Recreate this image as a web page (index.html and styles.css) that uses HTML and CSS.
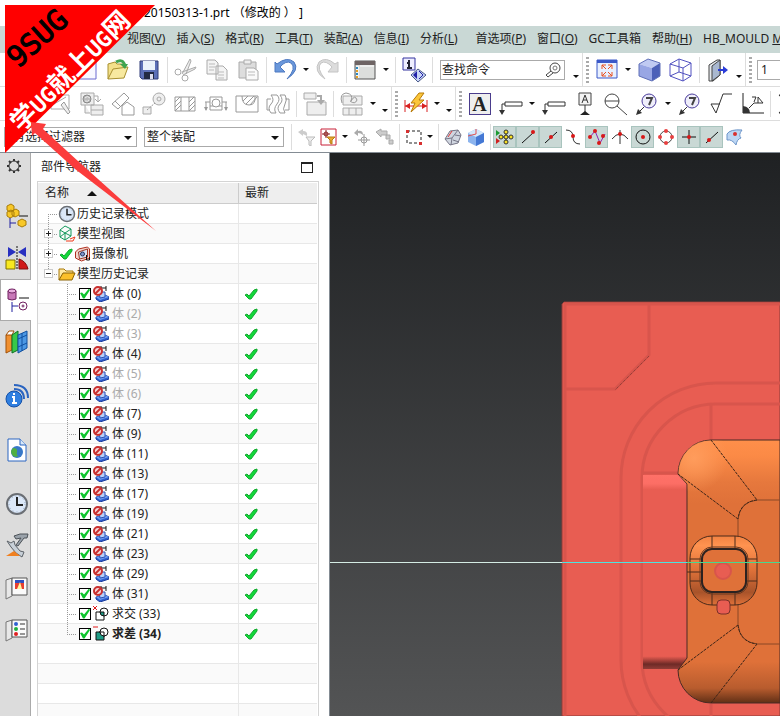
FILE: index.html
```html
<!doctype html>
<html lang="zh-CN">
<head>
    <meta charset="UTF-8">
    <meta name="viewport" content="width=device-width, initial-scale=1.0">
    <title>20150313-1.prt</title>
    <link rel="stylesheet" href="styles.css">
</head>
<body>

<!--公用图标-->
<svg class="defs" width="0" height="0">
    <symbol id="i-ok" viewBox="0 0 14 14">
        <path d="M1 8l2-1 2 2 5-6 3-1 0 2-6 8-2 0z" fill="#12d83a" stroke="#12a82e" stroke-width="1"/>
    </symbol>
    <symbol id="i-body" viewBox="0 0 16 16">
        <path d="M3 11l9-2 4 2v2l-9 3-4-3z" fill="#2f5fd0" stroke="#1b3c9c"/>
        <path d="M3 11l9-2 4 2-9 3z" fill="#6d9cf0"/>
        <path d="M6 6h6v5l-5 1z" fill="#b8d2fa" stroke="#2a50b8"/>
        <path d="M8 0v5M13 0v5M8 2h5" stroke="#111" fill="none"/>
        <circle cx="5" cy="5" r="4" fill="#f6dada" stroke="#c83030" stroke-width="2"/>
        <path d="M2 8l6-6" stroke="#c83030" stroke-width="2"/>
    </symbol>
    <symbol id="i-intersect" viewBox="0 0 16 16">
        <path d="M0 0l4 4M4 0L0 4" stroke="#e01818"/>
        <path d="M7 6h4v4q-4 0-4-4z" fill="#1f9c86"/>
        <path d="M3 6h8v8H3z" fill="none" stroke="#111" stroke-width="1"/>
        <circle cx="11" cy="6" r="4" fill="none" stroke="#111" stroke-width="1"/>
    </symbol>
    <symbol id="i-subtract" viewBox="0 0 16 16">
        <path d="M0 1h5" stroke="#e01818"/>
        <path d="M3 6h8v8H3z" fill="#1f9c86" stroke="#111"/>
        <circle cx="11" cy="6" r="4" fill="#fff" stroke="#111"/>
        <path d="M11 6v5M6 6h5" fill="none" stroke="#111"/>
    </symbol>
    <symbol id="i-clock" viewBox="0 0 24 24">
        <circle cx="12" cy="12" r="10" fill="#dce8f8" stroke="#6a6e74" stroke-width="2"/>
        <circle cx="12" cy="12" r="8" fill="none" stroke="#8fa4c0" stroke-dasharray="1 3"/>
        <path d="M12 5v8h6" fill="none" stroke="#222" stroke-width="2"/>
    </symbol>
    <symbol id="i-views" viewBox="0 0 18 18">
        <path d="M2 5l5-4 6 3v7l-6 4-5-3zM2 5l5 3 6-4M7 8v7M2 12l5-4 6 3" fill="none" stroke="#12985a" stroke-width="1"/>
        <path d="M8 16h7l2-4-5 2" fill="none" stroke="#f03818" stroke-width="1"/>
    </symbol>
    <symbol id="i-camera" viewBox="0 0 16 16">
        <path d="M1 6l3-3 9-2 2 2v9l-8 3-6-3z" fill="#f3d4cc" stroke="#b03020"/>
        <path d="M4 6l9-3v8l-8 2z" fill="#d8e0f2" stroke="#a03828"/>
        <circle cx="8" cy="8" r="2" fill="#8098d0" stroke="#25345e"/>
        <path d="M12 9v5h3v-3" fill="none" stroke="#111"/>
    </symbol>
    <symbol id="i-folder" viewBox="0 0 18 18">
        <path d="M1 15V4h5l2 2h7v3" fill="#ffe9a0" stroke="#a87808"/>
        <path d="M1 15l4-7h12l-3 7z" fill="#fbc02a" stroke="#8a6204"/>
    </symbol>
    <symbol id="i-callout" viewBox="0 0 24 24">
        <path d="M9 15l-7 7" stroke="#333"/><path d="M1 23l2-6 4 4z" fill="#333"/>
        <circle cx="14" cy="9" r="7" fill="#efeefa" stroke="#4a3c9c" stroke-width="1"/>
        <path d="M11 6h6l-3 7" fill="none" stroke="#444" stroke-width="2"/>
    </symbol>
    <symbol id="i-note" viewBox="0 0 24 24">
        <path d="M6 12H3v8M6 10h17v4H6z" fill="none" stroke="#333"/>
        <path d="M0 18h6l-3 5z" fill="#333"/>
    </symbol>
</svg>

<div id="app">
    <header class="title">20150313-1.prt （修改的 ） ]</header>

    <nav class="menu">
        <a href="#">视图(<u>V</u>)</a>
        <a href="#">插入(<u>S</u>)</a>
        <a href="#">格式(<u>R</u>)</a>
        <a href="#">工具(<u>T</u>)</a>
        <a href="#">装配(<u>A</u>)</a>
        <a href="#">信息(<u>I</u>)</a>
        <a href="#">分析(<u>L</u>)</a>
        <a href="#" class="wide">首选项(<u>P</u>)</a>
        <a href="#">窗口(<u>O</u>)</a>
        <a href="#">GC工具箱</a>
        <a href="#">帮助(<u>H</u>)</a>
        <a href="#">HB_MOULD <u>M</u></a>
    </nav>

    <!--标准工具条-->
    <div class="bar standard">
        <div class="group">
            <button class="btn" aria-label="新建"><svg width="24" height="24"><path d="M3 2h18v19H3z" fill="#f8f8ff" stroke="#6a6ad0" stroke-width="1"/></svg></button>
            <button class="btn" aria-label="打开"><svg width="24" height="24"><path d="M2 21V6l7-2 2 2h8v5" fill="#f3e08a" stroke="#a89030"/><path d="M2 21l5-10 15-2-4 11z" fill="#f7e9a0" stroke="#a89030"/><path d="M10 4q7-4 9 4" fill="none" stroke="#3fa450" stroke-width="3"/><path d="M14 6h8l-3 5z" fill="#3fa450"/></svg></button>
            <button class="btn" aria-label="保存"><svg width="24" height="24"><path d="M3 3h18v18H5l-2-2z" fill="#5c70b8" stroke="#303c78"/><path d="M6 3h12v9H6z" fill="#eaf2fb"/><path d="M7 14h10v7H7z" fill="#222a44"/><path d="M13 16h3v5h-3z" fill="#dde"/></svg></button>
            <i class="sep"></i>
            <button class="btn off" aria-label="剪切"><svg width="24" height="24"><path d="M8 16L16 1l1 2-5 13M8 14l14-5-1 2-12 6" fill="#eee" stroke="#aaa"/><circle cx="4" cy="14" r="3" fill="none" stroke="#aaa" stroke-width="1"/><circle cx="11" cy="20" r="3" fill="none" stroke="#aaa" stroke-width="1"/></svg></button>
            <button class="btn off" aria-label="复制"><svg width="24" height="24"><path d="M2 2h8l3 3v11H2zM11 8h7l4 4v10H11z" fill="#f4f4f4" stroke="#aaa"/><path d="M4 6h6M4 9h6M4 12h5M13 14h6M13 17h6M13 20h6" stroke="#bbb"/></svg></button>
            <button class="btn off" aria-label="粘贴"><svg width="24" height="24"><path d="M3 4h17v16H3z" fill="#ddd" stroke="#aaa"/><path d="M8 2h7v4H8z" fill="#eee" stroke="#aaa"/><path d="M10 10h8l4 3v9H10z" fill="#fafafa" stroke="#aaa"/><path d="M12 14h7M12 17h7" stroke="#bbb"/></svg></button>
            <i class="sep"></i>
            <button class="btn" aria-label="撤消"><svg width="24" height="24"><path d="M7 9q6-7 11-4 6 5-4 16 13-9 7-17-7-6-17 2L2 4v10h10z" fill="#6a98dc" stroke="#4c78c0"/></svg></button>
            <button class="drop" aria-label="撤消列表"></button>
            <button class="btn off" aria-label="重做"><svg width="24" height="24"><path d="M16 9q-6-7-11-4-5 5 4 16Q-3 13 3 4q7-6 16 2l3-2v10H12z" fill="#dcdcdc" stroke="#c4c4c4"/></svg></button>
            <i class="sep"></i>
            <button class="btn" aria-label="窗口"><svg width="24" height="24"><path d="M2 3h20v18H2z" fill="#dcdedc" stroke="#555"/><path d="M2 3h20v4H2z" fill="#6e6464"/><path d="M3 8h3v12H3z" fill="#f4f4f4"/><path d="M4 9v2M4 15v2" stroke="#2a8ac0" stroke-width="2"/><path d="M4 12v2M4 18v2" stroke="#e8a020" stroke-width="2"/><path d="M7 8h14" stroke="#fff"/></svg></button>
            <button class="drop" aria-label="窗口列表"></button>
            <i class="sep"></i>
            <button class="btn" aria-label="命令帮助"><svg width="26" height="26"><path d="M2 1h12v12H2z" fill="#eef" stroke="#3434a0"/><path d="M8 3v2M6 6h2v5M6 11h5" fill="none" stroke="#223" stroke-width="2"/><path d="M10 18l7-6 8 6-8 7z" fill="#c8d4f4" stroke="#4a5a8a" stroke-width="1"/><path d="M12 18l4-4v8z" fill="#2222a8"/><path d="M18 14l4 4-4 4" fill="none" stroke="#2222a8"/></svg></button>
            <i class="sep"></i>
            <div class="search">
                <input type="text" value="查找命令" aria-label="查找命令">
                <svg width="18" height="18"><circle cx="11" cy="7" r="5" fill="none" stroke="#444"/><circle cx="11" cy="7" r="2" fill="none" stroke="#777"/><path d="M7 10l-5 4 2 2 5-4" fill="none" stroke="#444"/></svg>
            </div>
            <button class="drop low" aria-label="更多"></button>
        </div>
        <div class="group">
            <i class="grip"></i>
            <button class="btn" aria-label="适合窗口"><svg width="24" height="24"><path d="M2 2h20v18H2z" fill="#e8f0ff" stroke="#3a58c8"/><path d="M2 2h20v3H2z" fill="#3a58c8"/><path d="M7 11V7h4M17 11V7h-4M7 14v4h4M17 14v4h-4M7 7l4 4M17 7l-4 4M7 18l4-4M17 18l-4-4" fill="none" stroke="#e85020"/></svg></button>
            <button class="drop" aria-label="视图列表"></button>
            <button class="btn" aria-label="着色"><svg width="24" height="24"><path d="M1 6l9-5 12 4-8 5z" fill="#c0caf2"/><path d="M1 6l13 4v13L1 18z" fill="#98a6e4"/><path d="M14 10l8-5v13l-8 5z" fill="#4c60b8"/><path d="M1 6l9-5 12 4v13l-8 5-13-5z" fill="none" stroke="#6070b8"/></svg></button>
            <button class="btn" aria-label="线框"><svg width="24" height="24"><path d="M1 6l9-5 12 4v13l-8 5-13-5zM1 6l13 4 8-5M14 10v13M10 1v13M1 18l9-4 12 4" fill="none" stroke="#5050c0"/></svg></button>
            <i class="sep"></i>
            <button class="btn" aria-label="剖切"><svg width="24" height="24"><path d="M3 7l8-5h3v15l-7 6H3z" fill="#e4e8ec" stroke="#444"/><path d="M6 8l8-6v15l-8 6z" fill="#a9b8d0" stroke="#444"/><path d="M12 12h8" stroke="#2a3cd8" stroke-width="2"/><path d="M17 8l5 4-5 4z" fill="#2a3cd8"/></svg></button>
            <button class="drop low" aria-label="更多"></button>
        </div>
        <div class="group">
            <i class="grip"></i>
            <input class="layer" type="text" value="1" aria-label="图层">
        </div>
    </div>

    <!--特征工具条-->
    <div class="bar feature">
        <div class="group">
            <button class="btn off" aria-label="草图"><svg width="24" height="24"><path d="M2 3h18v14H2zM5 12l12-7" fill="none" stroke="#aaa"/><path d="M12 13l3-3 6 10-2 2z" fill="#eee" stroke="#999"/></svg></button>
            <button class="btn off" aria-label="装配"><svg width="24" height="24"><path d="M1 1h13v12H1zM5 13v8h5M11 13h12v10H11zM11 18h12" fill="#eee" stroke="#aaa"/><circle cx="7" cy="7" r="4" fill="#bbb" stroke="#888"/><path d="M5 6q2-3 5 0M5 9q3 1 4-1" fill="none" stroke="#eee"/><path d="M14 4h4v6M15 7l3 3 3-3" fill="none" stroke="#aaa" stroke-width="1"/></svg></button>
            <button class="btn off" aria-label="拔模"><svg width="24" height="24"><path d="M1 12L13 1l5 5L7 17zM4 9l5 5" fill="none" stroke="#999"/><path d="M11 23v-9l5-4 7 5v8z" fill="#fff" stroke="#999"/></svg></button>
            <button class="btn off" aria-label="链接"><svg width="24" height="24"><circle cx="17" cy="7" r="6" fill="#eee" stroke="#aaa"/><circle cx="17" cy="7" r="2" fill="none" stroke="#aaa"/><path d="M1 15h8v7H1z" fill="#eee" stroke="#aaa"/><path d="M5 18l8-7" stroke="#999" stroke-dasharray="2 1"/></svg></button>
            <button class="btn off" aria-label="孔"><svg width="24" height="24"><path d="M2 5h20v14H2zM8 5v14M16 5v14M2 10l5-5M2 15l6-6M2 19l6-6M16 10l5-5M16 15l6-6M16 19l6-6" fill="none" stroke="#999"/></svg></button>
            <button class="btn off" aria-label="凸台"><svg width="24" height="24"><path d="M6 5h12v13H6zM1 10h5M18 10h5M2 10v8M22 10v8M6 14h12" fill="none" stroke="#999"/><circle cx="12" cy="11" r="4" fill="#fff" stroke="#999"/><path d="M0 15h4l-2 4zM20 15h4l-2 4z" fill="#999"/></svg></button>
            <button class="btn off" aria-label="腔体"><svg width="24" height="24"><path d="M1 4h22v16H1zM7 4q0 9 7 9t6-9M11 12l8-8M15 13l7-8M8 9l5-5" fill="none" stroke="#999"/></svg></button>
            <button class="btn off" aria-label="螺纹"><svg width="24" height="24"><path d="M5 3q4 5 0 9t0 9h5q-3-4 1-9t0-9zM14 3q4 5 0 9t0 9h5q-3-4 0-9t0-9zM1 7h4M1 18h3M1 7v11M19 7h4v11h-4" fill="none" stroke="#999"/></svg></button>
            <i class="sep"></i>
            <button class="btn off" aria-label="移动"><svg width="24" height="24"><path d="M1 1h12v6H1zM4 10h19v13H4z" fill="#eee" stroke="#aaa"/><path d="M14 4h4v4" fill="none" stroke="#aaa" stroke-width="2"/><path d="M14 8h8l-4 5z" fill="#aaa"/></svg></button>
            <i class="sep"></i>
            <button class="btn off" aria-label="同步建模"><svg width="24" height="24"><path d="M3 4h19v9H3zM3 16h19v7H3zM9 16v7M16 16v7" fill="#eee" stroke="#aaa"/><path d="M2 11Q-1 2 6 1q8 1 5 8 4-7 6-1-2 5-7 1" fill="none" stroke="#999" stroke-width="1"/></svg></button>
            <button class="drop" aria-label="同步建模列表"></button>
            <button class="drop low" aria-label="更多"></button>
        </div>
        <div class="group">
            <i class="grip"></i>
            <button class="btn" aria-label="快速尺寸"><svg width="24" height="24"><path d="M1 8v12M23 8v12M1 14h22" stroke="#d82020"/><path d="M1 14l5-3v6zM23 14l-5-3v6z" fill="#d82020"/><path d="M15 1h5l-5 7h5L7 20l4-9H7z" fill="#fbc63a" stroke="#b87a08"/></svg></button>
            <button class="drop" aria-label="尺寸列表"></button>
            <button class="drop low" aria-label="更多"></button>
        </div>
        <div class="group last">
            <i class="grip"></i>
            <button class="btn" aria-label="注释"><span class="letter">A</span></button>
            <button class="btn" aria-label="指引线"><svg width="24" height="24"><use href="#i-note"/></svg></button>
            <button class="drop" aria-label="指引线列表"></button>
            <button class="btn" aria-label="标签"><svg width="24" height="24"><use href="#i-note"/></svg></button>
            <button class="btn" aria-label="基准"><svg width="24" height="24"><path d="M6 1h12v12H6z" fill="#f4f4f4" stroke="#444"/><path d="M9 11l3-8 3 8M10 8h4M12 13v7" fill="none" stroke="#333"/><path d="M7 23l5-4 5 4z" fill="#222"/></svg></button>
            <button class="btn" aria-label="目标"><svg width="24" height="24"><circle cx="8" cy="9" r="7" fill="none" stroke="#444"/><path d="M1 9h14M13 14l10 9" stroke="#444"/></svg></button>
            <button class="btn" aria-label="符号"><svg width="24" height="24"><use href="#i-callout"/></svg></button>
            <button class="drop" aria-label="符号列表"></button>
            <button class="btn" aria-label="标识"><svg width="24" height="24"><use href="#i-callout"/></svg></button>
            <button class="btn" aria-label="粗糙度"><svg width="24" height="24"><path d="M2 12h9M2 12l5 9 7-19h9" fill="none" stroke="#333"/></svg></button>
            <button class="btn" aria-label="焊接"><svg width="24" height="24"><path d="M3 1v20h21" fill="none" stroke="#222" stroke-width="1"/><path d="M3 14q7 1 7 7H3z" fill="#333"/><path d="M9 16l5-5h9M12 5h4l-2 5M18 11V5l5 6" fill="none" stroke="#333"/></svg></button>
            <i class="sep"></i>
            <button class="btn" aria-label="求和"><svg width="24" height="24"><path d="M20 3H2l8 9-8 9h18" fill="none" stroke="#333"/></svg></button>
        </div>
    </div>

    <!--选择工具条-->
    <div class="bar selection">
        <div class="combo filter">
            <select aria-label="类型过滤器"><option>有选择过滤器</option></select>
        </div>
        <div class="combo scope">
            <select aria-label="选择范围"><option>整个装配</option></select>
        </div>
        <i class="sep"></i>
        <button class="btn off" aria-label="重置过滤器"><svg width="18" height="18"><path d="M1 4l5-3v2q5 0 4 5l-4-2v2z" fill="#ccc"/><path d="M9 9h9l-4 4v5l-2-1v-4z" fill="#eee" stroke="#bbb"/></svg></button>
        <button class="btn" aria-label="常规过滤器"><svg width="18" height="18"><path d="M1 1h15v16H1z" fill="#fff" stroke="#c82038"/><path d="M6 2v8M2 6h8" stroke="#8a2020"/><circle cx="6" cy="6" r="2" fill="none" stroke="#8a2020"/><path d="M7 9h8l-3 3v4l-2-1v-3z" fill="#e8a830" stroke="#b87a10"/></svg></button>
        <button class="drop" aria-label="过滤器列表"></button>
        <button class="btn off" aria-label="捕捉恢复"><svg width="18" height="18"><path d="M1 5l4-4v2q5-1 5 4-2-2-5-2v3z" fill="#aaa"/><circle cx="11" cy="12" r="3" fill="none" stroke="#999"/><path d="M11 6v12M5 12h12" stroke="#999"/></svg></button>
        <button class="btn off" aria-label="层次选择"><svg width="18" height="18"><path d="M0 4l5-3v2h6v4H5v2zM10 7h4v4h-4zM13 12h4v4h-4z" fill="#ccc" stroke="#aaa"/></svg></button>
        <i class="sep"></i>
        <button class="btn" aria-label="矩形选择"><svg width="18" height="18"><path d="M2 3h14v12H2z" fill="none" stroke="#222" stroke-dasharray="3 2"/><path d="M1 2h3v3H1zM14 14h3v3h-3z" fill="#d83030"/></svg></button>
        <button class="drop" aria-label="选择方式"></button>
        <i class="sep"></i>
        <button class="btn" aria-label="高亮面"><svg width="18" height="18"><path d="M1 11l5-8 8-1 3 5-3 8-8 2z" fill="#d0d6e0" stroke="#778"/><path d="M1 11l7-1 6-8M8 10l-1 7M11 7l6 1M9 12l6 2" fill="none" stroke="#778"/><path d="M4 9l4-6" stroke="#e03838"/></svg></button>
        <button class="btn" aria-label="高亮体"><svg width="18" height="18"><path d="M1 5l8-4 8 4v9l-8 4-8-4z" fill="#8cb4ee"/><path d="M1 5l8 4 8-4-8-4z" fill="#d4e8fc"/><path d="M9 9v9l8-4V5z" fill="#4478d4"/><path d="M9 1v5l-8 2" fill="none" stroke="#e05050"/></svg></button>
        <i class="sep"></i>
        <button class="btn on" aria-label="启用捕捉点"><svg width="18" height="18"><path d="M0 2l4 3-4 3z" fill="#1a9a30"/><path d="M0 10l4 3-4 3z" fill="#d02020"/><path d="M10 3v12M4 9h12" stroke="#333"/><g fill="#f8e020" stroke="#333"><circle cx="10" cy="9" r="2"/><circle cx="10" cy="4" r="2"/><circle cx="10" cy="14" r="2"/><circle cx="5" cy="9" r="2"/><circle cx="15" cy="9" r="2"/></g></svg></button>
        <button class="btn on" aria-label="端点"><svg width="18" height="18"><path d="M3 15L15 4" stroke="#111"/><circle cx="14" cy="4" r="2" fill="#d81818"/></svg></button>
        <button class="btn on" aria-label="中点"><svg width="18" height="18"><path d="M3 15L15 4" stroke="#111"/><circle cx="9" cy="9" r="2" fill="#d81818"/></svg></button>
        <button class="btn" aria-label="控制点"><svg width="18" height="18"><path d="M1 2q7 0 7 7t7 7" fill="none" stroke="#333"/><circle cx="8" cy="8" r="2" fill="#d81818"/></svg></button>
        <button class="btn on" aria-label="交点"><svg width="18" height="18"><path d="M2 9l5-6 5 12 5-9" fill="none" stroke="#9020b0" stroke-width="1"/><g fill="#d81818"><circle cx="2" cy="9" r="2"/><circle cx="7" cy="3" r="2"/><circle cx="11" cy="15" r="2"/><circle cx="15" cy="8" r="2"/></g></svg></button>
        <button class="btn" aria-label="曲线交点"><svg width="18" height="18"><path d="M9 2v14M1 11q8-10 16 0" fill="none" stroke="#333"/><circle cx="9" cy="6" r="2" fill="#d81818"/></svg></button>
        <button class="btn on" aria-label="圆心"><svg width="18" height="18"><circle cx="9" cy="9" r="7" fill="none" stroke="#111" stroke-width="1"/><circle cx="9" cy="9" r="2" fill="#d81818"/></svg></button>
        <button class="btn" aria-label="象限点"><svg width="18" height="18"><circle cx="9" cy="9" r="6" fill="none" stroke="#444"/><g fill="#e84040"><circle cx="9" cy="3" r="2"/><circle cx="9" cy="15" r="2"/><circle cx="3" cy="9" r="2"/><circle cx="15" cy="9" r="2"/></g></svg></button>
        <button class="btn on" aria-label="现有点"><svg width="18" height="18"><path d="M9 2v14M2 9h14" stroke="#111"/><circle cx="9" cy="9" r="2" fill="#d81818"/></svg></button>
        <button class="btn on" aria-label="曲线上的点"><svg width="18" height="18"><path d="M3 15L15 4" stroke="#111"/><circle cx="6" cy="12" r="2" fill="#d81818"/></svg></button>
        <button class="btn" aria-label="面上的点"><svg width="18" height="18"><path d="M1 6q3-5 15-4-4 5-1 8-4 1-5 7Q6 11 1 12z" fill="#bcd6f4" stroke="#6c94c8"/><circle cx="9" cy="6" r="2" fill="#d83030"/></svg></button>
    </div>

    <main class="work">
        <!--资源条-->
        <div class="rail">
            <button class="gear" aria-label="设置"><svg width="16" height="16"><circle cx="8" cy="8" r="5" fill="none" stroke="#333" stroke-width="1"/><path d="M8 1v2M8 13v2M1 8h2M13 8h2M3 3l2 2M11 11l2 2M13 3l-2 2M3 13l2-2" stroke="#333" stroke-width="2"/></svg></button>
            <button aria-label="装配导航器"><svg width="24" height="26"><g fill="#f8c828" stroke="#a87c08"><path d="M2 3l4-2 3 2v4L5 9 2 7zM2 9l4-2 3 2v4l-4 2-3-2zM7 8l4-2 3 2v4l-4 2-3-2zM13 18l4-2 4 2v4l-4 2-4-2z"/></g><path d="M5 15v10M5 20h6" fill="none" stroke="#2020a0"/><path d="M14 13h9" stroke="#111"/></svg></button>
            <button aria-label="约束导航器"><svg width="24" height="26"><path d="M3 2l8 5-8 5zM21 2l-8 5 8 5z" fill="#2830c0"/><path d="M12 1v24" stroke="#111" stroke-dasharray="2 1"/><path d="M1 15h9v9H1z" fill="#f8e820" stroke="#807000"/><path d="M14 14v10h9q-2-8-9-10z" fill="#d01818" stroke="#801010"/></svg></button>
            <button class="active" aria-label="部件导航器"><svg width="24" height="26"><path d="M2 4v8q4 2 8 0V4z" fill="#c878b8" stroke="#702060"/><ellipse cx="6" cy="4" rx="4" ry="2" fill="#e8b0e0" stroke="#702060"/><path d="M13 11h10" stroke="#111"/><path d="M6 15v10M6 19h6" fill="none" stroke="#2020a0"/><circle cx="17" cy="19" r="4" fill="none" stroke="#702060"/><circle cx="17" cy="19" r="1" fill="none" stroke="#702060"/></svg></button>
            <button aria-label="重用库"><svg width="26" height="26"><path d="M2 6l6-4v19l-6 3z" fill="#f09030" stroke="#a05008"/><path d="M2 6l3-4h5L8 6z" fill="#fff" stroke="#a05008"/><path d="M8 6l6-4v19l-6 3z" fill="#38c848" stroke="#107020"/><path d="M14 6l9-4v17l-9 5z" fill="#4c98e4" stroke="#1050a0"/><path d="M14 10l9-4M14 18l9-4M18 4v18" stroke="#1050a0"/></svg></button>
            <button class="far" aria-label="HD3D 工具"><svg width="26" height="26"><circle cx="10" cy="16" r="8" fill="#2f7fe0" stroke="#1450a8"/><path d="M10 10v2M8 14h2v6M8 20h5" fill="none" stroke="#fff" stroke-width="2"/><path d="M10 6q10 0 10 10M10 2q14 0 14 13" fill="none" stroke="#2a64c0" stroke-width="2"/></svg></button>
            <button class="far" aria-label="浏览器"><svg width="24" height="26"><path d="M3 2h12l6 6v16H3z" fill="#fff" stroke="#2a64c0"/><path d="M15 2v6h6" fill="#d8e8f8" stroke="#2a64c0"/><circle cx="12" cy="15" r="6" fill="#3878c8"/><path d="M8 11q5 0 4 4t2 4q-7 3-8-5z" fill="#50b040"/></svg></button>
            <button class="far" aria-label="历史记录"><svg width="24" height="24"><use href="#i-clock"/></svg></button>
            <button aria-label="过程工作室"><svg width="24" height="26"><path d="M9 3l6-2h8l-1 4h-3l-6 8-2-1 5-7-5 1z" fill="#9aa2aa" stroke="#4c5258"/><path d="M2 8l4 2 3-2 1 4 5 6 4 1-2 5-6-4-5-6z" fill="#c8d0d8" stroke="#5c6268"/><path d="M1 23l8-5 6 5z" fill="#f08020"/></svg></button>
            <button aria-label="加工向导"><svg width="26" height="24"><path d="M2 4l6-2v18l-6 3z" fill="#e8e8e8" stroke="#777"/><path d="M8 2h15v17H8z" fill="#fafafa" stroke="#555"/><path d="M11 4h9v9h-9z" fill="#e84030"/><path d="M11 4h9v3h-9z" fill="#3050c0"/><path d="M13 13l3-7 2 7z" fill="#fff8a0"/></svg></button>
            <button aria-label="角色"><svg width="26" height="24"><path d="M2 4l6-2v18l-6 3z" fill="#e8e8e8" stroke="#777"/><path d="M8 2h15v17H8z" fill="#fafafa" stroke="#555"/><circle cx="12" cy="6" r="2" fill="#3060d0"/><circle cx="12" cy="11" r="2" fill="#20b040"/><circle cx="12" cy="16" r="2" fill="#e02020"/><path d="M16 6h5M16 11h5M16 16h5" stroke="#333"/></svg></button>
        </div>

        <!--部件导航器-->
        <section class="panel">
            <div class="head">
                <h1>部件导航器</h1>
                <button class="max" aria-label="最大化"></button>
            </div>
            <div class="tree">
                <table>
                    <thead>
                    <tr><th>名称<i class="up"></i></th><th class="state">最新</th></tr>
                    </thead>
                    <tbody id="rows">
                    <tr><td><div class="cell"><i class="guide first"></i><svg width="18" height="18"><use href="#i-clock"/></svg><span>历史记录模式</span></div></td><td></td></tr>
                    <tr><td><div class="cell"><i class="guide"><b class="box plus"></b></i><svg width="18" height="18"><use href="#i-views"/></svg><span>模型视图</span></div></td><td></td></tr>
                    <tr><td><div class="cell"><i class="guide"><b class="box plus"></b></i><svg width="16" height="14"><use href="#i-ok"/></svg><svg width="17" height="16"><use href="#i-camera"/></svg><span>摄像机</span></div></td><td></td></tr>
                    <tr><td><div class="cell"><i class="guide last"><b class="box"></b></i><svg width="18" height="18"><use href="#i-folder"/></svg><span>模型历史记录</span></div></td><td></td></tr>
                    </tbody>
                </table>
            </div>
        </section>

        <!--图形窗口-->
        <div class="view">
            <svg viewBox="330 153 450 563" preserveAspectRatio="xMinYMin slice">
                <defs>
                    <linearGradient id="orange" x1="0" y1="440" x2="0" y2="704" gradientUnits="userSpaceOnUse">
                        <stop offset="0" stop-color="#ff8f4a"/>
                        <stop offset="0.06" stop-color="#fb8a46"/>
                        <stop offset="0.16" stop-color="#e6783d"/>
                        <stop offset="0.24" stop-color="#df7139"/>
                        <stop offset="0.84" stop-color="#df7139"/>
                        <stop offset="0.94" stop-color="#b85c2e"/>
                        <stop offset="1" stop-color="#5a2c14"/>
                    </linearGradient>
                    <linearGradient id="slab" x1="0" y1="474" x2="0" y2="670" gradientUnits="userSpaceOnUse">
                        <stop offset="0" stop-color="#ff7168"/>
                        <stop offset="0.05" stop-color="#fc6e65"/>
                        <stop offset="0.08" stop-color="#e85d52"/>
                        <stop offset="0.93" stop-color="#e85d52"/>
                        <stop offset="0.97" stop-color="#6e2a26"/>
                        <stop offset="1" stop-color="#96403a"/>
                    </linearGradient>
                    <linearGradient id="ring" x1="0" y1="535" x2="0" y2="605" gradientUnits="userSpaceOnUse">
                        <stop offset="0" stop-color="#f08040"/>
                        <stop offset="0.15" stop-color="#ff9350"/>
                        <stop offset="0.5" stop-color="#df7139"/>
                        <stop offset="0.82" stop-color="#a8532a"/>
                        <stop offset="1" stop-color="#df7139"/>
                    </linearGradient>
                    <radialGradient id="shine" cx="694" cy="458" r="34" gradientUnits="userSpaceOnUse">
                        <stop offset="0" stop-color="#ff9c5c"/>
                        <stop offset="1" stop-color="#ff9c5c" stop-opacity="0"/>
                    </radialGradient>
                    <path id="plate" d="M780 440h-69a33 34 0 0 0-33 34l9 10v174l-9 12a33 33 0 0 0 33 33h69z"/>
                </defs>
                <path d="M562 716V304l2-2h216v414z" fill="#e85d52" stroke="#8a3c38"/>
                <g fill="none" stroke="#d8554c" stroke-width="3">
                    <path d="M565 716V304h215M649 304v51l-34 34h-50"/>
                    <path d="M780 383h-64a95 95 0 0 0-95 95v182a95 95 0 0 0 95 95"/>
                    <path d="M780 404h-64a74 74 0 0 0-74 74v182a74 74 0 0 0 74 74"/>
                    <path d="M711 404v36M711 704v12M643 473h38"/>
                </g>
                <path d="M649 356l-34 34" stroke="#7a3430" stroke-dasharray="1 1"/>
                <path d="M643 475h36l8 9v174l-8 11h-36z" fill="url(#slab)"/>
                <use href="#plate" fill="url(#orange)" stroke="#4a2a24"/>
                <use href="#plate" fill="url(#shine)"/>
                <g fill="none" stroke="#3c2418">
                    <path d="M711 440l46 60M678 474l60 45M678 670l60-45M711 703l46-59" stroke-dasharray="3 1"/>
                    <path d="M780 500h-23q-17 2-19 19v106q2 17 19 19h23" stroke="#8a4826"/>
                    <path d="M757 500q-17 2-19 19M738 625q2 17 19 19" stroke-dasharray="3 1"/>
                </g>
                <rect x="690" y="536" width="67" height="69" rx="22" fill="url(#ring)" stroke="#4a2a1a"/>
                <path d="M712 536v13M735 536v13M712 592v13M735 592v13M690 559h12M690 581h12M746 559h11M746 581h11M687 572h15" stroke="#4a2a1a"/>
                <rect x="702" y="549" width="44" height="43" rx="10" fill="#df7139" stroke="#2c2220" stroke-width="2"/>
                <rect x="700" y="547" width="48" height="47" rx="12" fill="none" stroke="#6a3a20"/>
                <circle cx="723" cy="571" r="8" fill="#e85d52" stroke="#d8554c" stroke-width="2"/>
                <rect x="717" y="600" width="13" height="14" rx="4" fill="#e85d52" stroke="#7a3028"/>
                <path d="M330 562h232" stroke="#d4ece4" shape-rendering="crispEdges"/>
                <path d="M562 562h125" stroke="#4ce4e0" shape-rendering="crispEdges"/>
                <path d="M687 562h93" stroke="#48d890" shape-rendering="crispEdges"/>
            </svg>
        </div>
    </main>

    <!--角标与箭头-->
    <svg class="badge" width="160" height="236">
        <path d="M5 5h150L5 153z" fill="#f00"/>
        <text class="site" transform="translate(18 69) rotate(-42)">9SUG</text>
        <text class="slogan" transform="translate(21 133) rotate(-45)">学<tspan class="en">UG</tspan>就上<tspan class="en">UG</tspan>网</text>
        <path d="M31 122l15 2-3 5 36 33 77 69-81-62-40-36-3 3z" fill="#fb3c3c"/>
    </svg>
</div>

<script>
    //部件历史记录
    var bodies = [0, 2, 3, 4, 5, 6, 7, 9, 11, 13, 17, 19, 21, 23, 29, 31];
    var hidden = [2, 3, 5, 6];
    var rows = document.querySelector('#rows');
    var html = '';

    function createRow(id, name, icon, cls) {
        return '<tr class="' + cls + '"><td><div class="cell child">' +
            '<i class="guide"></i>' +
            '<input type="checkbox" id="f' + id + '" checked>' +
            '<svg width="16" height="16"><use href="#' + icon + '"/></svg>' +
            '<label for="f' + id + '">' + name + ' (' + id + ')</label>' +
            '</div></td><td class="state"><svg width="14" height="14"><use href="#i-ok"/></svg></td></tr>';
    }

    bodies.forEach(function (id) {
        html += createRow(id, '体', 'i-body', hidden.indexOf(id) > -1 ? 'dim' : '');
    });
    html += createRow(33, '求交', 'i-intersect', '');
    html += createRow(34, '求差', 'i-subtract', 'current');

    //空行
    for (var i = 0; i < 20; i++) {
        html += '<tr><td></td><td></td></tr>';
    }
    rows.innerHTML += html;
</script>
</body>
</html>
```
FILE: styles.css
```css
* {
    margin: 0;
    padding: 0;
    box-sizing: border-box;
}

body {
    font: 12px/18px "Noto Sans", "Noto Sans CJK SC", sans-serif;
    color: #222;
    background: #fff;
}

button, input, select {
    font: inherit;
    color: inherit;
    border: 0;
    background: none;
}

svg {
    display: block;
    flex: none;
}

.defs {
    position: absolute;
}

#app {
    height: 100vh;
    display: flex;
    flex-direction: column;
    overflow: hidden;
    position: relative;
}

.title {
    height: 26px;
    flex: none;
    padding-left: 144px;
    line-height: 26px;
    color: #000;
    white-space: pre;
}

.menu {
    height: 27px;
    flex: none;
    display: flex;
    gap: 11px;
    padding-left: 127px;
    background: #c9d8d5;
    line-height: 25px;
    white-space: nowrap;
    overflow: hidden;
}

.menu a {
    color: #222;
    text-decoration: none;
}

.menu .wide {
    margin-left: 7px;
}

/* 工具条 */
.bar {
    flex: none;
    display: flex;
    align-items: stretch;
    height: 34px;
    border-bottom: 1px solid #ddd;
    overflow: hidden;
}

.standard {
    padding-left: 71px;
}

.feature {
    padding-left: 45px;
}

.group {
    display: flex;
    flex: none;
    align-items: center;
    border-right: 1px solid #ddd;
}

.group.last {
    border-right: 0;
}

.btn {
    width: 31px;
    height: 31px;
    flex: none;
    display: flex;
    align-items: center;
    justify-content: center;
}

.drop {
    width: 12px;
    height: 24px;
    flex: none;
    display: flex;
    align-items: center;
    justify-content: center;
}

.drop::before {
    content: "";
    border: 3px solid transparent;
    border-top-color: #111;
    border-bottom: 0;
}

.drop.low {
    align-items: flex-end;
    height: 16px;
}

.search + .drop {
    margin-left: 5px;
}

.sep {
    flex: none;
    width: 6px;
    height: 26px;
    background: linear-gradient(#ddd, #ddd) center / 1px 100% no-repeat;
}

.grip {
    flex: none;
    width: 3px;
    height: 26px;
    margin: 0 2px 0 3px;
    background: repeating-linear-gradient(#aaa 0 2px, #fff 2px 4px);
}

.search {
    display: flex;
    align-items: center;
    width: 125px;
    height: 20px;
    margin-left: 5px;
    padding-right: 2px;
    border: 1px solid #aaa;
}

.search input {
    flex: 1;
    min-width: 0;
    padding-left: 1px;
}

.layer {
    width: 60px;
    height: 20px;
    margin-left: 3px;
    padding-left: 3px;
    border: 1px solid #aaa;
}

.letter {
    width: 22px;
    height: 22px;
    border: 1px solid #4a3c8c;
    background: #eee;
    font: bold 20px/20px "Liberation Serif", serif;
}

.selection {
    height: 32px;
    align-items: center;
    border-bottom-color: #848c94;
    padding-left: 4px;
}

.selection .btn {
    width: 23px;
    height: 22px;
}

.selection .drop {
    width: 10px;
}

.selection .on {
    background: #c9d8d5;
    border: 1px solid #a9c4be;
}

.combo {
    position: relative;
    flex: none;
    height: 20px;
}

.combo select {
    appearance: none;
    width: 100%;
    height: 20px;
    padding: 0 16px 0 2px;
    border: 1px solid #aaa;
}

.combo::after {
    content: "";
    position: absolute;
    right: 5px;
    top: 9px;
    border: 4px solid transparent;
    border-top-color: #111;
    border-bottom: 0;
    pointer-events: none;
}

.filter {
    width: 133px;
    margin-right: 7px;
}

.filter select {
    padding-left: 8px;
}

.scope {
    width: 140px;
    margin-right: 4px;
}

/* 工作区 */
.work {
    flex: 1;
    min-height: 0;
    display: flex;
}

.rail {
    flex: none;
    width: 31px;
    background: #dcdcdc;
    border-right: 1px solid #aaa;
}

.rail button {
    display: flex;
    align-items: center;
    justify-content: center;
    width: 100%;
    height: 42px;
    padding-left: 3px;
}

.rail .gear {
    height: 26px;
    margin-bottom: 16px;
    padding: 0 3px 0 0;
}

.rail .active {
    width: 31px;
    background: #fff;
    border: 1px solid #aaa;
    border-right: 0;
}

.rail .far {
    margin-top: 12px;
}

.panel {
    flex: none;
    width: 299px;
    display: flex;
    flex-direction: column;
    padding: 0 10px 0 6px;
    border-right: 1px solid #848c94;
    background: #fff;
}

.head {
    flex: none;
    display: flex;
    align-items: center;
    justify-content: space-between;
    height: 28px;
    padding: 0 6px 0 4px;
}

.head h1 {
    font-size: 12px;
    font-weight: 400;
}

.max {
    width: 12px;
    height: 11px;
    border: 1px solid #222;
    border-top-width: 2px;
}

.tree {
    flex: 1;
    min-height: 0;
    overflow: hidden;
    border: 1px solid #d4d4d4;
    border-bottom: 0;
    padding: 1px 1px 0 0;
}

.tree table {
    width: 100%;
    table-layout: fixed;
    border-collapse: separate;
    border-spacing: 0;
}

.tree th {
    height: 21px;
    padding-left: 7px;
    font-weight: 400;
    text-align: left;
    background: #eee;
    border-bottom: 1px solid #ccc;
}

.tree th.state {
    width: 79px;
    padding-left: 6px;
    border-left: 1px solid #ccc;
}

.up {
    display: inline-block;
    margin-left: 18px;
    vertical-align: middle;
    border: 5px solid transparent;
    border-bottom-color: #111;
    border-top: 0;
}

.tree td {
    height: 20px;
    border-bottom: 1px solid #e8e8e8;
}

.tree td + td {
    border-left: 1px solid #e8e8e8;
}

.tree td.state {
    padding-left: 5px;
}

.tree tbody tr:nth-child(even) {
    background: #fafafa;
}

.cell {
    display: flex;
    align-items: center;
    height: 19px;
    white-space: nowrap;
}

.cell span, .cell label {
    margin-left: 1px;
}

.cell.child {
    padding-left: 19px;
}

.cell.child label {
    margin-left: 3px;
}

.cell input {
    appearance: none;
    width: 12px;
    height: 12px;
    margin: 0 2px;
    border: 1px solid #000;
    background: #fff;
}

.cell input:checked::after {
    content: "";
    display: block;
    height: 10px;
    background: #0cc42c;
    clip-path: polygon(0 45%, 20% 40%, 40% 60%, 90% 0, 100% 15%, 45% 100%, 30% 100%);
}

/* 树形虚线 */
.guide {
    flex: none;
    display: flex;
    align-items: center;
    justify-content: center;
    width: 20px;
    height: 19px;
    background: repeating-linear-gradient(#999 0 1px, transparent 1px 2px) 10px 0 / 1px 19px no-repeat,
        repeating-linear-gradient(90deg, #999 0 1px, transparent 1px 2px) 10px 10px / 10px 1px no-repeat;
}

.guide.first {
    background-position: 10px 10px, 10px 10px;
}

.guide.last, .current .guide {
    background-size: 1px 10px, 10px 1px;
}

.box {
    width: 9px;
    height: 9px;
    border: 1px solid #ccc;
    background: linear-gradient(#222, #222) center / 5px 1px no-repeat, #fff;
}

.box.plus {
    background: linear-gradient(#222, #222) center / 5px 1px no-repeat,
        linear-gradient(#222, #222) center / 1px 5px no-repeat, #fff;
}

.dim {
    color: #aaa;
}

.current {
    font-weight: 700;
}

.view {
    flex: 1;
    min-width: 0;
    background: linear-gradient(#1f2123, #535455);
}

.view svg {
    width: 100%;
    height: 100%;
}

/* 角标 */
.badge {
    position: absolute;
    left: 0;
    top: 0;
    pointer-events: none;
}

.site {
    font: 29px "DejaVu Sans Mono", monospace;
    fill: #000;
    stroke: #000;
    stroke-width: 1px;
}

.slogan {
    font: bold 26px "Noto Sans CJK SC", sans-serif;
    fill: #fff;
}

.slogan .en {
    font: bold 22px "DejaVu Sans Mono", monospace;
}
```
